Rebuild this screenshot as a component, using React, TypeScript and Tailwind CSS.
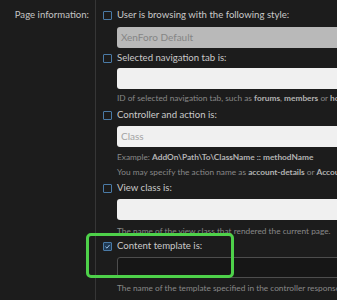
import React from 'react';

const Check: React.FC<{ checked?: boolean }> = ({ checked }) => (
  <span
    className={
      'flex h-[9px] w-[9px] shrink-0 items-center justify-center rounded-[1px] border border-[#4a7aa6] ' +
      (checked ? 'bg-[#1f3a55]' : 'bg-transparent')
    }
  >
    {checked && (
      <svg viewBox="0 0 10 10" className="h-[7px] w-[7px]">
        <path d="M2 5.2 L4.2 7.3 L8 2.8" fill="none" stroke="#9cc3e8" strokeWidth="1.4" />
      </svg>
    )}
  </span>
);

const Label: React.FC<{ text: string; checked?: boolean; className?: string }> = ({ text, checked, className }) => (
  <div className={'flex h-[18px] items-center ' + (className || '')}>
    <div className="w-[14px] pl-[7px]">
      <Check checked={checked} />
    </div>
    <span className="ml-[7px] whitespace-nowrap text-[9.6px] text-[#c9c9c9]">{text}</span>
  </div>
);

const Hint: React.FC<{ children: React.ReactNode; className?: string }> = ({ children, className }) => (
  <div className={'ml-[21px] flex h-[14px] items-center whitespace-nowrap text-[8.3px] text-[#888888] ' + (className || '')}>
    <span>{children}</span>
  </div>
);

const B: React.FC<{ children: React.ReactNode }> = ({ children }) => (
  <b className="font-bold text-[#b3b3b3]">{children}</b>
);

const App: React.FC = () => {
  return (
    <div
      className="relative h-[300px] w-[337px] overflow-hidden bg-[#1c1c1c]"
      style={{ fontFamily: 'Lato, "Noto Sans", sans-serif' }}
    >
      <div className="flex h-full">
        <div className="w-[95px] shrink-0 pr-[6px] pt-[6px] text-right">
          <div className="flex h-[18px] items-center justify-end whitespace-nowrap text-[9.6px] text-[#c4c4c4]">
            Page information:
          </div>
        </div>
        <div className="w-[600px] shrink-0 border-l border-[#363636] pt-[6px]">
          <Label text="User is browsing with the following style:" />
          <div className="ml-[21px] mt-[3px] flex h-[21px] items-center rounded-[3px] bg-[#b9b9b9] px-[4px] text-[10px] text-[#858585]">
            XenForo Default
          </div>
          <Label text="Selected navigation tab is:" className="mt-[1px]" />
          <div className="ml-[21px] mt-[1px] h-[21px] rounded-[3px] bg-[#f0f0f0]" />
          <Hint className="mt-[2px]">
            ID of selected navigation tab, such as <B>forums</B>, <B>members</B> or <B>home</B>.
          </Hint>
          <Label text="Controller and action is:" className="mt-[1px]" />
          <div className="ml-[21px] mt-[2px] flex h-[21px] items-center rounded-[3px] bg-[#f0f0f0] px-[4px] text-[10px] text-[#a3a3a3]">
            Class
          </div>
          <Hint className="mt-[3px]">
            Example: <B>AddOn\Path\To\ClassName :: methodName</B>
          </Hint>
          <Hint className="mt-[1px]">
            You may specify the action name as <B>account-details</B> or <B>AccountDetails</B>.
          </Hint>
          <Label text="View class is:" />
          <div className="ml-[21px] mt-[2px] h-[21px] rounded-[3px] bg-[#f0f0f0]" />
          <Hint className="mt-[4px]">The name of the view class that rendered the current page.</Hint>
          <Label text="Content template is:" checked className="mt-[-1px]" />
          <div className="ml-[21px] mt-[2px] h-[21px] rounded-[3px] border border-[#4d4d4d] bg-[#161616]" />
          <Hint className="mt-[3px]">The name of the template specified in the controller response.</Hint>
        </div>
      </div>
      <div className="pointer-events-none absolute left-[86px] top-[233px] h-[45px] w-[148px] rounded-[5px] border-[3px] border-[#4ed14a]" />
    </div>
  );
};

export default App;
